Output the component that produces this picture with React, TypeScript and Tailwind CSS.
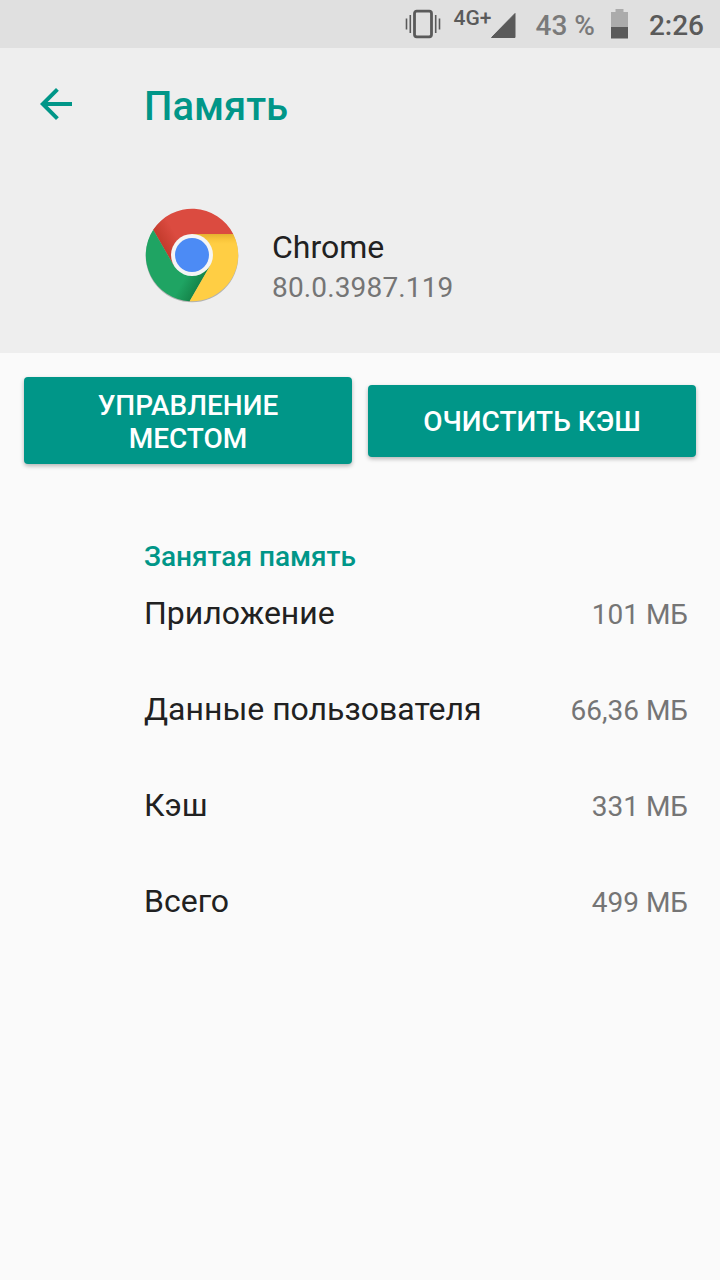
import React from 'react';

interface StorageItem {
  label: string;
  value: string;
}

const storageItems: StorageItem[] = [
  { label: 'Приложение', value: '101 МБ' },
  { label: 'Данные пользователя', value: '66,36 МБ' },
  { label: 'Кэш', value: '331 МБ' },
  { label: 'Всего', value: '499 МБ' }
];

const VibrateIcon: React.FC = () => (
  <svg width="36" height="30" viewBox="0 0 36 30" fill="none" stroke="#5a5a5a">
    <rect x="9.5" y="2.2" width="17" height="25.6" rx="2.2" strokeWidth="2.8" />
    <path d="M1.5 9.5v11M5.3 6v18M30.7 6v18M34.5 9.5v11" strokeWidth="1.6" />
  </svg>
);

const BatteryIcon: React.FC = () => (
  <svg width="17" height="30" viewBox="0 0 17 30">
    <path d="M4.5 0h8v3H17v15H0V3h4.5z" fill="#ababab" />
    <path d="M0 18h17v11.5H0z" fill="#5a5a5a" />
  </svg>
);

const ChromeLogo: React.FC = () => (
  <svg width="96" height="96" viewBox="-48 -48 96 96">
    <defs>
      <linearGradient id="red-shade" gradientUnits="userSpaceOnUse" x1="-29" y1="-8" x2="-14" y2="-17">
        <stop offset="0" stopColor="#a52714" stopOpacity="0.45" />
        <stop offset="1" stopColor="#a52714" stopOpacity="0" />
      </linearGradient>
      <linearGradient id="yellow-shade" gradientUnits="userSpaceOnUse" x1="0" y1="-21" x2="0" y2="-11">
        <stop offset="0" stopColor="#a66b00" stopOpacity="0.3" />
        <stop offset="1" stopColor="#ea9e00" stopOpacity="0" />
      </linearGradient>
      <linearGradient id="green-shade" gradientUnits="userSpaceOnUse" x1="9" y1="27" x2="-5" y2="19">
        <stop offset="0" stopColor="#055524" stopOpacity="0.4" />
        <stop offset="1" stopColor="#055524" stopOpacity="0" />
      </linearGradient>
    </defs>
    <circle cy="1" r="46.3" fill="#000" fillOpacity="0.25" />
    <path d="M0 -21H41.2A46.3 46.3 0 0 0 -38.8 -25.2L-18.2 10.5L0 0z" fill="#db4b40" />
    <path d="M0 -21H41.2A46.3 46.3 0 0 0 -38.8 -25.2L-18.2 10.5L0 0z" fill="url(#red-shade)" />
    <path d="M-18.2 10.5L-38.8 -25.2A46.3 46.3 0 0 0 -2.4 46.2L18.2 10.5L0 0z" fill="#1fa463" />
    <path d="M-18.2 10.5L-38.8 -25.2A46.3 46.3 0 0 0 -2.4 46.2L18.2 10.5L0 0z" fill="url(#green-shade)" />
    <path d="M18.2 10.5L-2.4 46.2A46.3 46.3 0 0 0 41.2 -21H0V0z" fill="#ffce44" />
    <path d="M18.2 10.5L-2.4 46.2A46.3 46.3 0 0 0 41.2 -21H0V0z" fill="url(#yellow-shade)" />
    <circle r="21" fill="#f5f5f5" />
    <circle r="17" fill="#4c8bf5" />
  </svg>
);

const StatusBar: React.FC = () => (
  <div className="flex h-12 items-start justify-end bg-[#e0e0e0] pr-4 text-[28px] leading-[52px] font-medium text-[#5a5a5a]">
    <div className="mt-[9px] mr-[13px]">
      <VibrateIcon />
    </div>
    <span className="mt-[7px] text-[21px] leading-[22px]">4G+</span>
    <svg className="mt-[13px]" width="25" height="25" viewBox="0 0 25 25">
      <path d="M24 0.5v24H0.5z" fill="#5a5a5a" stroke="#5a5a5a" strokeLinejoin="round" />
    </svg>
    <span className="ml-[19px] text-[#7a7a7a]">43 %</span>
    <div className="mt-[9px] mr-[21px] ml-4">
      <BatteryIcon />
    </div>
    <span>2:26</span>
  </div>
);

const App: React.FC = () => {
  return (
    <div className="h-[1280px] w-[720px] overflow-hidden bg-[#fafafa] font-['Roboto',sans-serif]">
      <StatusBar />

      <header className="h-[305px] bg-[#eeeeee]">
        <div className="flex h-28 items-center pl-10">
          <button aria-label="Назад" className="w-[104px]">
            <svg width="32" height="32" viewBox="4 4 16 16" fill="#009688">
              <path d="M20 11H7.83l5.59-5.59L12 4l-8 8 8 8 1.41-1.41L7.83 13H20v-2z" />
            </svg>
          </button>
          <h1 className="pt-[5px] text-[40px] leading-[48px] font-medium text-[#009688]">Память</h1>
        </div>
        <div className="mt-[47px] flex pl-36">
          <ChromeLogo />
          <div className="ml-8 pt-5">
            <div className="text-[32px] leading-[40px] text-[#212121]">Chrome</div>
            <div className="text-[28px] leading-[41px] tracking-[0.15px] text-[#757575]">80.0.3987.119</div>
          </div>
        </div>
      </header>

      <div className="flex items-center gap-4 px-6 pt-6">
        <button className="h-[87px] w-[328px] rounded bg-[#009688] px-12 pt-0.5 text-[28px] leading-[33px] font-medium text-white shadow-[0_2px_4px_rgba(0,0,0,0.28)]">
          УПРАВЛЕНИЕ МЕСТОМ
        </button>
        <button className="h-[72px] w-[328px] rounded bg-[#009688] pt-0.5 text-[28px] leading-[33px] font-medium text-white shadow-[0_2px_4px_rgba(0,0,0,0.28)]">
          ОЧИСТИТЬ КЭШ
        </button>
      </div>

      <section className="pt-[76px] pr-8 pl-36">
        <h2 className="text-[28px] leading-[33px] font-medium text-[#009688]">Занятая память</h2>
        <div className="-mt-2">
          {storageItems.map((item) => (
            <div key={item.label} className="flex h-24 items-center justify-between">
              <span className="text-[32px] leading-[38px] text-[#212121]">{item.label}</span>
              <span className="pt-[3px] text-[28px] leading-[33px] text-[#757575]">{item.value}</span>
            </div>
          ))}
        </div>
      </section>
    </div>
  );
};

export default App;
